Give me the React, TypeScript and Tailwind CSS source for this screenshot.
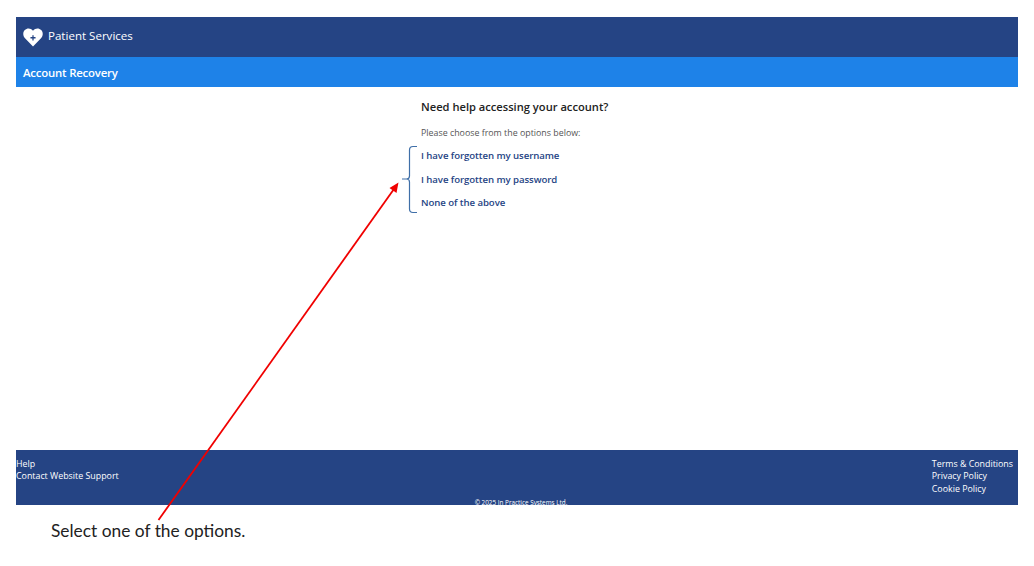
const font = "font-['Open_Sans',sans-serif]";

function HeartLogo() {
  return (
    <svg width="20" height="19" viewBox="0 0 22 20" preserveAspectRatio="none" className="shrink-0">
      <path
        fill="#fff"
        fillRule="evenodd"
        d="M11 19.5 2.2 10.8C-.4 8.2-.2 4.400 2 2.200 4.400-.1 8.500-.1 11 3c2.500-3.100 6.600-3.100 9-.8 2.200 2.200 2.400 6 -.2 8.600L11 19.500ZM10.300 7.500v2.100H8.200v1.400h2.100v2.100h1.400v-2.100h2.100V9.600h-2.100V7.500h-1.400Z"
      />
    </svg>
  );
}

/** Red arrow and blue bracket drawn over the screenshot */
function Annotation() {
  return (
    <svg width="1034" height="566" className="absolute left-0 top-0 pointer-events-none">
      <path d="M417 146.500h-4q-3.500 0-3.500 3.500v26q0 3-3 3h-4.500h4.500q3 0 3 3v27q0 3.500 3.500 3.500h4" fill="none" stroke="#3f6fa8" strokeWidth="1.200" />
      <line x1="158.500" y1="520" x2="394" y2="189" stroke="#f00000" strokeWidth="1.800" />
      <polygon points="398.500,182.500 396.500,193 389.500,188" fill="#f00000" />
    </svg>
  );
}

export default function App() {
  return (
    <div className={`relative w-[1034px] h-[566px] overflow-hidden bg-white pt-[17px] px-[16px] ${font}`}>
      <header className="h-[40px] bg-[#254484] flex items-center gap-[5px] pl-[7px] text-white">
        <HeartLogo />
        <span className="text-[11.550px] leading-none pb-[2px]">Patient Services</span>
      </header>
      <div className="h-[30px] bg-[#1e82e8] flex items-center pl-[7px] pt-[2px] text-white text-[11.400px] font-semibold tracking-[-0.2px]">
        Account Recovery
      </div>

      <main className="h-[363px] pl-[405px] pt-[11px]">
        <h1 className="text-[11.150px] leading-[17px] font-semibold text-[#222]">Need help accessing your account?</h1>
        <p className="mt-[12px] text-[8.850px] leading-[12px] text-[#555]">Please choose from the options below:</p>
        <ul className="mt-[9px] flex flex-col gap-[8.200px] text-[9.650px] leading-[15.400px] font-semibold tracking-[-0.08px] text-[#254484]">
          <li>I have forgotten my username</li>
          <li>I have forgotten my password</li>
          <li>None of the above</li>
        </ul>
      </main>

      <footer className="relative h-[55px] bg-[#254484] text-white text-[8.850px] leading-[12.600px] flex justify-between pt-[7.500px] pr-[5px]">
        <div className="flex flex-col">
          <span>Help</span>
          <span>Contact Website Support</span>
        </div>
        <div className="flex flex-col">
          <span>Terms &amp; Conditions</span>
          <span>Privacy Policy</span>
          <span>Cookie Policy</span>
        </div>
        <span className="absolute bottom-[-2px] left-[8px] right-0 text-center text-[6.350px] leading-[8px]">© 2025 In Practice Systems Ltd.</span>
      </footer>

      <p className="mt-[15px] pl-[35px] font-['Lato',sans-serif] text-[17.350px] leading-[22px] text-[#222]">Select one of the options.</p>

      <Annotation />
    </div>
  );
}
